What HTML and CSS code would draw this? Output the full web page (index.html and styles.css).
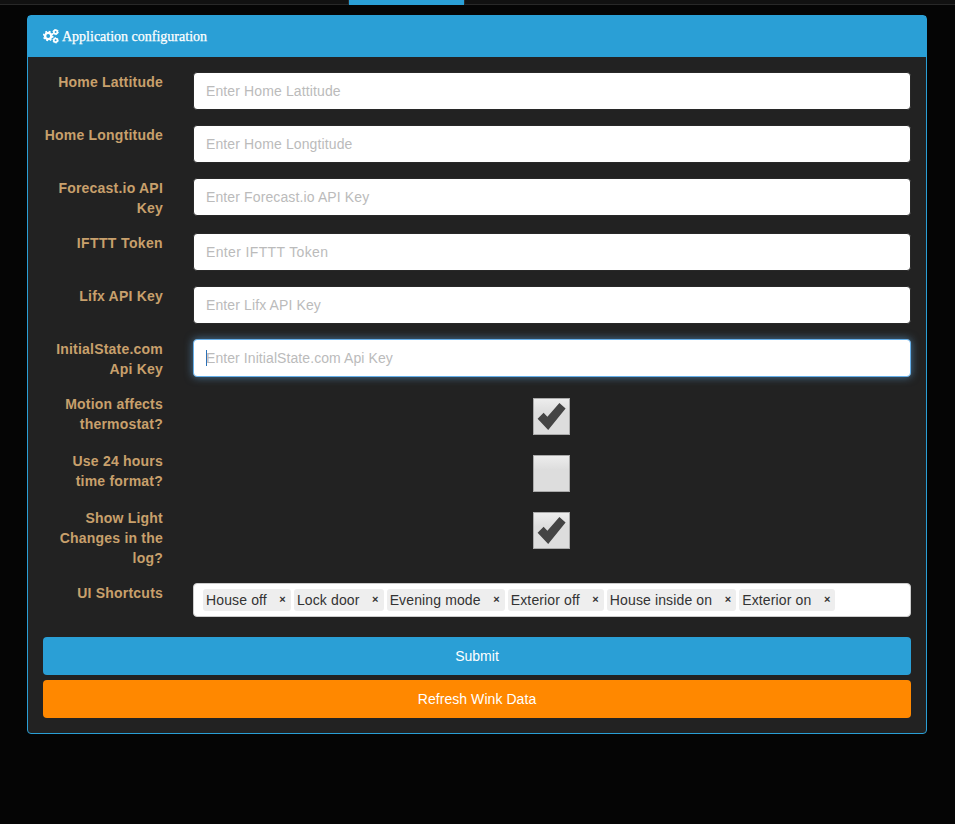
FILE: index.html
```html
<!DOCTYPE html>
<html lang="en">
<head>
<meta charset="utf-8">
<title>Application configuration</title>
<link rel="stylesheet" href="styles.css">
</head>
<body>
<nav class="navbar"><div class="tab-active"></div></nav>
<main class="panel">
  <header class="panel-heading">
    <svg class="cogs" width="16" height="15" viewBox="0 0 16 15">
      <g fill="none" stroke="#fff">
        <circle cx="5.2" cy="7" r="3.1" stroke-width="2.4"/>
        <circle cx="5.2" cy="7" r="4.6" stroke-width="1.5" stroke-dasharray="1.8 1.813"/>
        <circle cx="12.6" cy="3" r="1.8" stroke-width="1.7"/>
        <circle cx="12.6" cy="3" r="2.7" stroke-width="1" stroke-dasharray="1.4 1.427"/>
        <circle cx="12.6" cy="11.3" r="1.8" stroke-width="1.7"/>
        <circle cx="12.6" cy="11.3" r="2.7" stroke-width="1" stroke-dasharray="1.4 1.427"/>
      </g>
    </svg>
    <span class="title">Application configuration</span>
  </header>
  <form class="panel-body">
    <div class="row"><label>Home Lattitude</label><div class="control">Enter Home Lattitude</div></div>
    <div class="row"><label>Home Longtitude</label><div class="control">Enter Home Longtitude</div></div>
    <div class="row"><label>Forecast.io API Key</label><div class="control">Enter Forecast.io API Key</div></div>
    <div class="row"><label class="wide">IFTTT Token</label><div class="control wide">Enter IFTTT Token</div></div>
    <div class="row"><label>Lifx API Key</label><div class="control">Enter Lifx API Key</div></div>
    <div class="row"><label>InitialState.com Api Key</label><div class="control focused">Enter InitialState.com Api Key</div></div>
    <div class="row"><label>Motion affects thermostat?</label><div class="check-cell"><div class="check"><svg width="37" height="37" viewBox="0 0 37 37"><path d="M4.6 20.8L10.6 14.8L14.4 18.8L26.4 5L32.6 10.5L15.2 32Z" fill="#444"/></svg></div></div></div>
    <div class="row"><label>Use 24 hours time format?</label><div class="check-cell"><div class="check"></div></div></div>
    <div class="row"><label>Show Light Changes in the log?</label><div class="check-cell"><div class="check"><svg width="37" height="37" viewBox="0 0 37 37"><path d="M4.6 20.8L10.6 14.8L14.4 18.8L26.4 5L32.6 10.5L15.2 32Z" fill="#444"/></svg></div></div></div>
    <div class="row"><label>UI Shortcuts</label>
      <div class="tags">
        <span class="tag">House off<b>×</b></span>
        <span class="tag">Lock door<b>×</b></span>
        <span class="tag">Evening mode<b>×</b></span>
        <span class="tag">Exterior off<b>×</b></span>
        <span class="tag">House inside on<b>×</b></span>
        <span class="tag">Exterior on<b>×</b></span>
      </div>
    </div>
    <button type="button" class="btn submit">Submit</button>
    <button type="button" class="btn refresh">Refresh Wink Data</button>
  </form>
</main>
</body>
</html>
```
FILE: styles.css
```css
* { box-sizing: border-box; }
body {
  margin: 0;
  min-height: 824px;
  background: #050505;
  font: 14px/20px "Liberation Sans", Arial, sans-serif;
}
.navbar {
  height: 5px;
  background: #111;
  box-shadow: inset 0 -1px #282828;
}
.tab-active {
  width: 117px;
  height: 5px;
  margin-left: 348px;
  background: #2a9fd6;
  border: solid #282828;
  border-width: 0 1px;
}
.panel {
  width: 900px;
  height: 719px;
  margin: 10px 0 0 27px;
  background: #222;
  border: 1px solid #2a9fd6;
  border-radius: 4px;
}
.panel-heading {
  display: flex;
  align-items: center;
  height: 41px;
  padding: 0 15px;
  background: #2a9fd6;
  color: #fff;
  font-family: "Liberation Serif", "Times New Roman", serif;
}
.title { -webkit-text-stroke: 0.25px #fff; }
.cogs { margin-right: 3px; }
.panel-body { padding: 15px 15px 0; }
.row {
  display: grid;
  grid-template-columns: 120px 718px;
  column-gap: 30px;
  align-items: start;
  margin-bottom: 15px;
}
label {
  color: #c8a06c;
  font-weight: 700;
  letter-spacing: 0.21px;
  text-align: right;
}
.control {
  height: 38px;
  padding: 8px 12px;
  background: #fff;
  border: 1px solid #282828;
  border-radius: 4px;
  color: #bbb;
  letter-spacing: 0.12px;
}
.wide { letter-spacing: 0.36px; }
.focused {
  position: relative;
  border-color: #66afe9;
  box-shadow: 0 0 8px rgba(102, 175, 233, 0.6);
  letter-spacing: 0.08px;
}
.focused::before {
  content: "";
  position: absolute;
  left: 12px;
  top: 10px;
  width: 1px;
  height: 16px;
  background: #2a72b8;
}
.check-cell {
  display: flex;
  justify-content: center;
  height: 42px;
  padding: 4px 1px 0 0;
}
.check {
  width: 37px;
  height: 37px;
  background: linear-gradient(#eee, #ddd 40%);
  box-shadow: inset 0 0 0 1px #aaa;
}
.check svg { display: block; }
.tags {
  display: flex;
  gap: 3px;
  height: 34px;
  padding: 5px 9px;
  background: #fff;
  border: 1px solid #ccc;
  border-radius: 4px;
}
.tag {
  display: flex;
  height: 22px;
  padding: 1px 5px 0 3px;
  background: #eee;
  border-radius: 3px;
  color: #333;
  letter-spacing: 0.13px;
}
.tag b {
  margin-left: 12.5px;
  font-size: 11px;
  line-height: 19px;
}
.btn {
  display: block;
  width: 868px;
  height: 38px;
  border: 0;
  border-radius: 4px;
  color: #fff;
  font: inherit;
}
.submit { margin-top: 20px; background: #2a9fd6; }
.refresh { margin-top: 5px; background: #f80; letter-spacing: 0.06px; }
```
